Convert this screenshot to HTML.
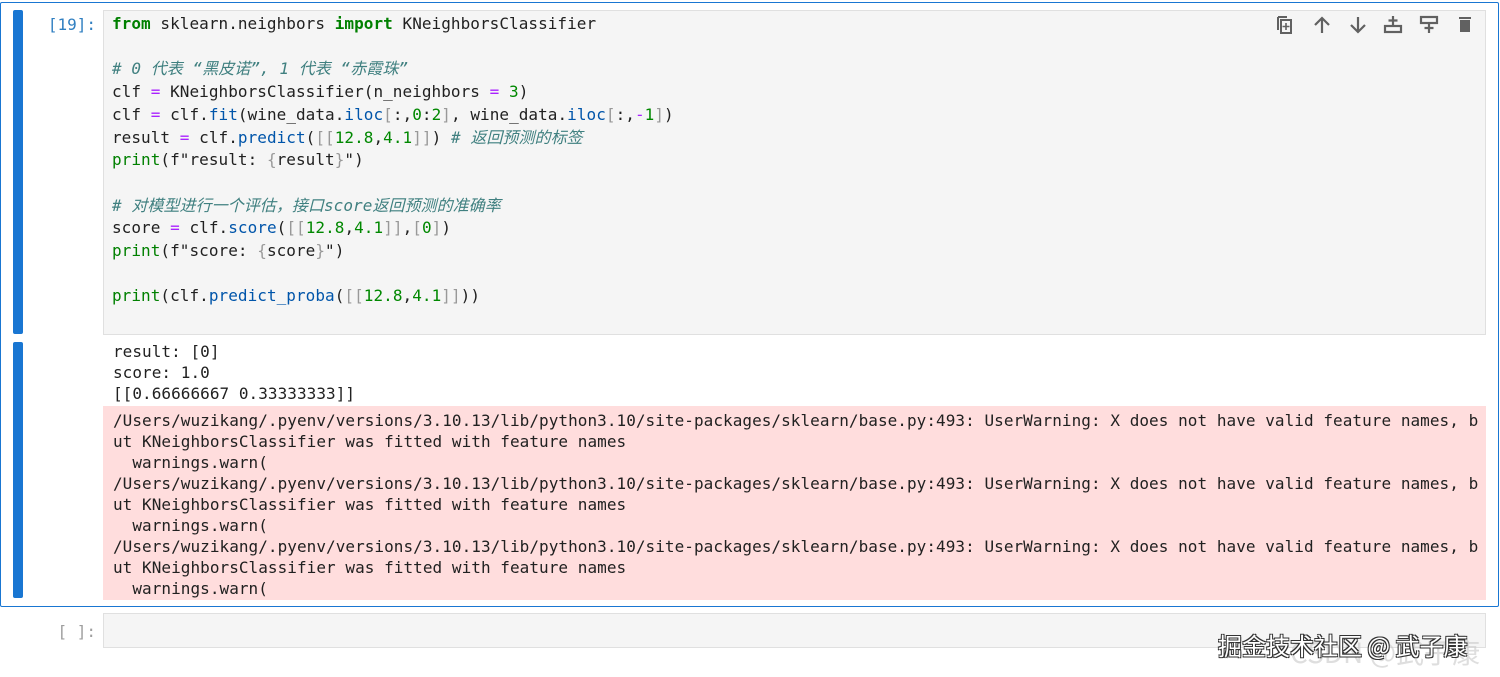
<!DOCTYPE html>
<html><head><meta charset="utf-8"><style>
*{margin:0;padding:0;box-sizing:border-box}
body{width:1500px;height:677px;background:#fff;position:relative;overflow:hidden;font-family:"DejaVu Sans Mono","Liberation Mono","Noto Sans CJK SC",monospace}
.cellsel{position:absolute;left:0;top:2px;width:1499px;height:605px;border:1px solid #1976d2;border-radius:2px}
.bar{position:absolute;left:13px;width:10px;background:#1976d2;border-radius:2px}
.prompt{position:absolute;font-size:16px;color:#307fc1;text-align:right;width:82px;left:14px;font-family:"DejaVu Sans Mono",monospace}
.inp{position:absolute;left:103px;width:1383px;background:#f5f5f5;border:1px solid #e0e0e0}
pre{font-family:"DejaVu Sans Mono","Noto Sans CJK SC",monospace;font-size:16px;white-space:pre;color:#212121;letter-spacing:0.05px}
.code{position:absolute;left:112px;top:13px;line-height:22.7px}
.k{color:#008000;font-weight:bold}.o{color:#aa22ff}.n{color:#008800}.f{color:#0055aa}.b{color:#008000}
.c{color:#408080;font-style:italic}.g{color:#999}
.out{position:absolute;left:113px;top:341px;line-height:21px;font-size:16px}
.err{position:absolute;left:103px;top:406px;width:1383px;height:194px;background:#fdd}
.err pre{position:absolute;left:10px;top:4px;line-height:21px}
.icons{position:absolute;top:14px;left:1275px}
.icons svg{position:absolute;top:0}
.wm{position:absolute;left:1218px;top:627px;font-family:"Noto Sans CJK SC",sans-serif;font-size:24px;color:#fff;text-shadow:1px 1px 0 #333,-1px -1px 0 #333,1px -1px 0 #333,-1px 1px 0 #333}
.wm2{position:absolute;left:1290px;top:632px;font-family:"Noto Sans CJK SC",sans-serif;font-size:28px;color:rgba(200,200,200,.6)}
</style></head><body>
<div class="cellsel"></div>
<div class="bar" style="top:10px;height:324px"></div>
<div class="bar" style="top:342px;height:256px"></div>
<div class="prompt" style="top:15px">[19]:</div>
<div class="inp" style="top:10px;height:325px"></div>
<pre class="code"><span class="k">from</span> sklearn.neighbors <span class="k">import</span> KNeighborsClassifier

<span class="c"># 0 代表 “黑皮诺”, 1 代表 “赤霞珠”</span>
clf <span class="o">=</span> KNeighborsClassifier(n_neighbors <span class="o">=</span> <span class="n">3</span>)
clf <span class="o">=</span> clf.<span class="f">fit</span>(wine_data.<span class="f">iloc</span><span class="g">[</span>:,<span class="n">0</span>:<span class="n">2</span><span class="g">]</span>, wine_data.<span class="f">iloc</span><span class="g">[</span>:,<span class="o">-</span><span class="n">1</span><span class="g">]</span>)
result <span class="o">=</span> clf.<span class="f">predict</span>(<span class="g">[[</span><span class="n">12.8</span>,<span class="n">4.1</span><span class="g">]]</span>) <span class="c"># 返回预测的标签</span>
<span class="b">print</span>(f"result: <span class="g">{</span>result<span class="g">}</span>")

<span class="c"># 对模型进行一个评估，接口score返回预测的准确率</span>
score <span class="o">=</span> clf.<span class="f">score</span>(<span class="g">[[</span><span class="n">12.8</span>,<span class="n">4.1</span><span class="g">]]</span>,<span class="g">[</span><span class="n">0</span><span class="g">]</span>)
<span class="b">print</span>(f"score: <span class="g">{</span>score<span class="g">}</span>")

<span class="b">print</span>(clf.<span class="f">predict_proba</span>(<span class="g">[[</span><span class="n">12.8</span>,<span class="n">4.1</span><span class="g">]]</span>))</pre>
<div class="icons">
<svg style="left:0" width="20" height="22" viewBox="0 0 20 22"><path d="M3 3h9M3 3v13" stroke="#616161" stroke-width="2" fill="none"/><rect x="6" y="6" width="10" height="13" stroke="#616161" stroke-width="2" fill="none"/><path d="M11 9v7M7.5 12.5h7" stroke="#616161" stroke-width="1.6"/></svg>
<svg style="left:37px" width="20" height="22" viewBox="0 0 20 22"><path d="M10 19V4M3 11l7-7 7 7" stroke="#616161" stroke-width="2.2" fill="none"/></svg>
<svg style="left:73px" width="20" height="22" viewBox="0 0 20 22"><path d="M10 3v15M3 11l7 7 7-7" stroke="#616161" stroke-width="2.2" fill="none"/></svg>
<svg style="left:108px" width="20" height="22" viewBox="0 0 20 22"><path d="M10 2v9M5.5 6.5h9" stroke="#616161" stroke-width="2.2"/><rect x="2" y="12" width="16" height="6" stroke="#616161" stroke-width="2.2" fill="none"/></svg>
<svg style="left:144px" width="20" height="22" viewBox="0 0 20 22"><rect x="2" y="3" width="16" height="6" stroke="#616161" stroke-width="2.2" fill="none"/><path d="M10 9v10M5.5 14h9" stroke="#616161" stroke-width="2.2"/></svg>
<svg style="left:180px" width="20" height="22" viewBox="0 0 20 22"><path d="M4 3h12v2H4z" fill="#616161"/><path d="M5 6h10v12H5z" fill="#616161"/></svg>
</div>
<pre class="out">result: [0]
score: 1.0
[[0.66666667 0.33333333]]</pre>
<div class="err"><pre>/Users/wuzikang/.pyenv/versions/3.10.13/lib/python3.10/site-packages/sklearn/base.py:493: UserWarning: X does not have valid feature names, b
ut KNeighborsClassifier was fitted with feature names
  warnings.warn(
/Users/wuzikang/.pyenv/versions/3.10.13/lib/python3.10/site-packages/sklearn/base.py:493: UserWarning: X does not have valid feature names, b
ut KNeighborsClassifier was fitted with feature names
  warnings.warn(
/Users/wuzikang/.pyenv/versions/3.10.13/lib/python3.10/site-packages/sklearn/base.py:493: UserWarning: X does not have valid feature names, b
ut KNeighborsClassifier was fitted with feature names
  warnings.warn(</pre></div>
<div class="prompt" style="top:622px;color:#9e9e9e">[ ]:</div>
<div class="inp" style="top:613px;height:35px"></div>
<div class="wm2">CSDN @武子康</div>
<div class="wm">掘金技术社区 @ 武子康</div>
</body></html>
